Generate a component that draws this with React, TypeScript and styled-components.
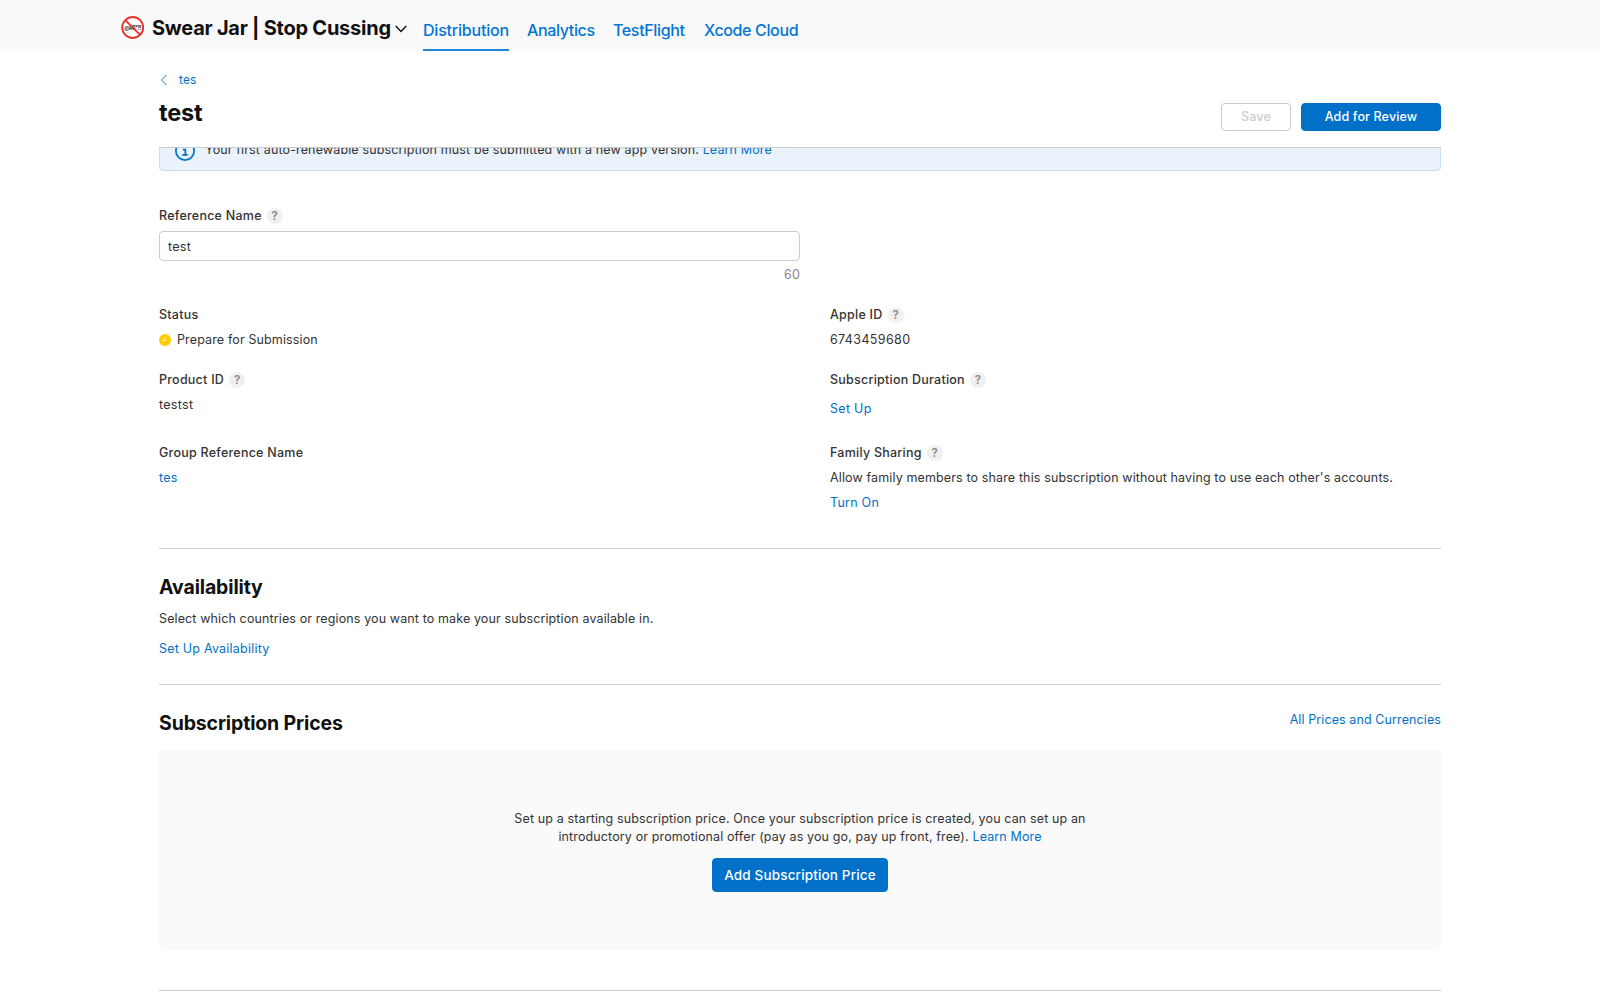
import React from "react";
import styled, { createGlobalStyle } from "styled-components";

const GlobalStyle = createGlobalStyle`
  * { box-sizing: border-box; }
  body {
    margin: 0;
    background: #fff;
    color: #333;
    font: 400 12.5px/18px Inter, "Liberation Sans", sans-serif;
    letter-spacing: 0.13px;
    -webkit-font-smoothing: antialiased;
    overflow: hidden;
  }
  h1, h2, p { margin: 0; }
  a { color: #0070c9; text-decoration: none; }
`;

const Page = styled.div`
  height: 1000px;
  overflow: hidden;
`;

const TopBar = styled.header`
  display: flex;
  height: 51px;
  padding-left: 119px;
  background: #f9f9f9;
`;

const AppMenu = styled.div`
  display: flex;
  align-items: center;
  height: 54px;
  color: #111;
`;

const AppName = styled.span`
  width: 239px;
  margin: 2px 0 0 6px;
  font-size: 20px;
  line-height: 26px;
  font-weight: 700;
  letter-spacing: -0.25px;
  white-space: nowrap;
`;

const Caret = styled.svg`
  margin: 4px 1px 0 4px;
`;

const Nav = styled.nav`
  display: flex;
  gap: 18px;
  margin-left: 15px;
`;

const NavLink = styled.a<{ $active?: boolean; $w: number }>`
  width: ${(p) => p.$w}px;
  height: 51px;
  padding-top: 20px;
  color: #0075d4;
  font-size: 16px;
  line-height: 20px;
  font-weight: 500;
  letter-spacing: ${(p) => (p.$active ? -0.2 : -0.36)}px;
  white-space: nowrap;
  border-bottom: 2px solid ${(p) => (p.$active ? "#1f86d9" : "transparent")};
`;

const Container = styled.div`
  width: 1282px;
  margin-left: 159px;
`;

const PageHead = styled.div`
  height: 97px;
  padding-top: 20px;
  border-bottom: 1px solid #ccc;
`;

const Crumb = styled.a`
  display: flex;
  align-items: center;
  height: 18px;
  gap: 11px;
  padding-left: 1px;
  font-size: 12px;
`;

const TitleRow = styled.div`
  display: flex;
  justify-content: space-between;
  margin-top: 9px;
`;

const Title = styled.h1`
  color: #111;
  font-size: 23.5px;
  line-height: 30px;
  font-weight: 700;
  letter-spacing: -0.2px;
`;

const Actions = styled.div`
  display: flex;
  gap: 10px;
  padding-top: 5px;
`;

const Button = styled.button<{ $w: number; $kind?: "ghost" | "large" }>`
  width: ${(p) => p.$w}px;
  height: ${(p) => (p.$kind === "large" ? 34 : 28)}px;
  padding: 0 0 ${(p) => (p.$kind === "large" ? 0 : 2)}px;
  border: 1px solid ${(p) => (p.$kind === "ghost" ? "#ccc" : "#0070c9")};
  border-radius: 4px;
  background: ${(p) => (p.$kind === "ghost" ? "#fff" : "#0070c9")};
  color: ${(p) => (p.$kind === "ghost" ? "#ccc" : "#fff")};
  font-family: inherit;
  font-size: ${(p) => (p.$kind === "large" ? 13.5 : 12.5)}px;
  font-weight: 500;
  letter-spacing: 0.15px;
  white-space: nowrap;
`;

const BannerClip = styled.div`
  height: 23px;
  overflow: hidden;
`;

const Banner = styled.div`
  display: flex;
  align-items: center;
  gap: 10px;
  height: 42px;
  margin-top: -19px;
  padding-left: 15px;
  border: 1px solid #c8dff2;
  border-radius: 4px;
  background: #eaf3fb;
  letter-spacing: 0.14px;
`;

const InfoIcon = styled.svg`
  margin-top: 2px;
`;

const Field = styled.div`
  width: 641px;
  margin-top: 36px;
`;

const Label = styled.div`
  display: flex;
  align-items: center;
  gap: 5px;
  height: 18px;
  font-weight: 500;
  letter-spacing: 0.24px;
`;

const HelpDot = styled.span`
  width: 16px;
  height: 16px;
  border-radius: 50%;
  background: #f0f0f0;
  color: #888;
  font-size: 11.5px;
  line-height: 16px;
  font-weight: 600;
  letter-spacing: 0;
  text-align: center;
`;

const Input = styled.input`
  display: block;
  width: 641px;
  height: 30px;
  margin-top: 6px;
  padding: 0 8px;
  border: 1px solid #ccc;
  border-radius: 4px;
  color: #333;
  font: inherit;
  letter-spacing: 0.3px;
  outline: none;
`;

const Counter = styled.div`
  margin-top: 5px;
  color: #888;
  text-align: right;
`;

const Details = styled.div`
  display: grid;
  grid-template-columns: 641px 1fr;
  column-gap: 30px;
  grid-template-rows: 65px 73px 104px;
  margin-top: 22px;
  border-bottom: 1px solid #ccc;
`;

const Value = styled.div<{ $top?: number; $track?: number }>`
  display: flex;
  align-items: center;
  margin-top: ${(p) => p.$top ?? 7}px;
  letter-spacing: ${(p) => p.$track ?? 0.13}px;
  white-space: nowrap;
`;

const StatusIcon = styled.svg`
  margin-right: 6px;
`;

const Section = styled.section<{ $h: number }>`
  height: ${(p) => p.$h}px;
  padding-top: 25px;
  border-bottom: 1px solid #ccc;
`;

const SectionHead = styled.div`
  display: flex;
  justify-content: space-between;
`;

const HeadLink = styled.a`
  padding-top: 1px;
  letter-spacing: 0.1px;
`;

const Heading = styled.h2`
  color: #111;
  font-size: 19.5px;
  line-height: 26px;
  font-weight: 700;
  letter-spacing: -0.14px;
`;

const Empty = styled.div`
  display: flex;
  flex-direction: column;
  align-items: center;
  height: 200px;
  margin-top: 14px;
  padding-top: 60px;
  border-radius: 4px;
  background: #fafafa;
  text-align: center;
`;

const EmptyText = styled.p`
  margin-bottom: 12px;
  white-space: nowrap;
`;

function Labelled({ text, help }: { text: string; help?: boolean }) {
  return (
    <Label>
      {text}
      {help && <HelpDot>?</HelpDot>}
    </Label>
  );
}

function AppIcon() {
  return (
    <svg width="27" height="27" viewBox="0 0 27 27">
      <rect x="1" y="1" width="25" height="25" rx="5.5" fill="#fff" />
      <text x="13.7" y="15.8" fontSize="5.6" fontWeight="600" letterSpacing="0" fontFamily="Inter, sans-serif" fill="#222" textAnchor="middle" textLength="17">
        @#$*?!
      </text>
      <circle cx="13.7" cy="13.5" r="10.5" fill="none" stroke="#e8352c" strokeWidth="1.9" />
      <path d="M6.3 6.1l14.8 14.8" stroke="#e8352c" strokeWidth="1.9" />
    </svg>
  );
}

export default function App() {
  return (
    <Page>
      <GlobalStyle />
      <TopBar>
        <AppMenu>
          <AppIcon />
          <AppName>Swear Jar | Stop Cussing</AppName>
          <Caret width="12" height="8" viewBox="0 0 12 8" fill="none" stroke="#111" strokeWidth="1.4">
            <path d="M.7 1l5.3 5.5L11.3 1" />
          </Caret>
        </AppMenu>
        <Nav>
          <NavLink $active $w={86}>Distribution</NavLink>
          <NavLink $w={68}>Analytics</NavLink>
          <NavLink $w={73}>TestFlight</NavLink>
          <NavLink $w={94}>Xcode Cloud</NavLink>
        </Nav>
      </TopBar>
      <Container>
        <PageHead>
          <Crumb>
            <svg width="8" height="12" viewBox="0 0 8 12" fill="none" stroke="#1a7dcf">
              <path d="M6.5 1l-5 5 5 5" />
            </svg>
            tes
          </Crumb>
          <TitleRow>
            <Title>test</Title>
            <Actions>
              <Button $w={70} $kind="ghost">Save</Button>
              <Button $w={140}>Add for Review</Button>
            </Actions>
          </TitleRow>
        </PageHead>
        <BannerClip>
          <Banner>
            <InfoIcon width="20" height="20" viewBox="0 0 20 20" fill="none" stroke="#0070c9">
              <circle cx="10" cy="10" r="9.1" strokeWidth="1.7" />
              <circle cx="9.8" cy="5.4" r="1.2" fill="#0070c9" stroke="none" />
              <path d="M7.8 8.7h2.6v5M7.3 13.9h5.4" strokeWidth="1.7" />
            </InfoIcon>
            <span>
              Your first auto-renewable subscription must be submitted with a new app version. <a>Learn More</a>
            </span>
          </Banner>
        </BannerClip>
        <Field>
          <Labelled text="Reference Name" help />
          <Input defaultValue="test" />
          <Counter>60</Counter>
        </Field>
        <Details>
          <div>
            <Labelled text="Status" />
            <Value>
              <StatusIcon width="12" height="12" viewBox="0 0 12 12">
                <circle cx="6" cy="6" r="6" fill="#fc0" />
                <path d="M6.4 2.6v4H3" fill="none" stroke="#fff" strokeOpacity=".85" />
              </StatusIcon>
              Prepare for Submission
            </Value>
          </div>
          <div>
            <Labelled text="Apple ID" help />
            <Value $track={0.37}>6743459680</Value>
          </div>
          <div>
            <Labelled text="Product ID" help />
            <Value $track={0.3}>testst</Value>
          </div>
          <div>
            <Labelled text="Subscription Duration" help />
            <Value $top={11} $track={0.3}><a>Set Up</a></Value>
          </div>
          <div>
            <Labelled text="Group Reference Name" />
            <Value $track={0.25}><a>tes</a></Value>
          </div>
          <div>
            <Labelled text="Family Sharing" help />
            <Value>Allow family members to share this subscription without having to use each other's accounts.</Value>
            <Value $track={0.25}><a>Turn On</a></Value>
          </div>
        </Details>
        <Section $h={136}>
          <Heading>Availability</Heading>
          <Value $top={10} $track={0.12}>Select which countries or regions you want to make your subscription available in.</Value>
          <Value $top={12} $track={0.22}><a>Set Up Availability</a></Value>
        </Section>
        <Section $h={306}>
          <SectionHead>
            <Heading>Subscription Prices</Heading>
            <HeadLink>All Prices and Currencies</HeadLink>
          </SectionHead>
          <Empty>
            <EmptyText>
              Set up a starting subscription price. Once your subscription price is created, you can set up an
              <br />
              introductory or promotional offer (pay as you go, pay up front, free). <a>Learn More</a>
            </EmptyText>
            <Button $w={176} $kind="large">Add Subscription Price</Button>
          </Empty>
        </Section>
      </Container>
    </Page>
  );
}
